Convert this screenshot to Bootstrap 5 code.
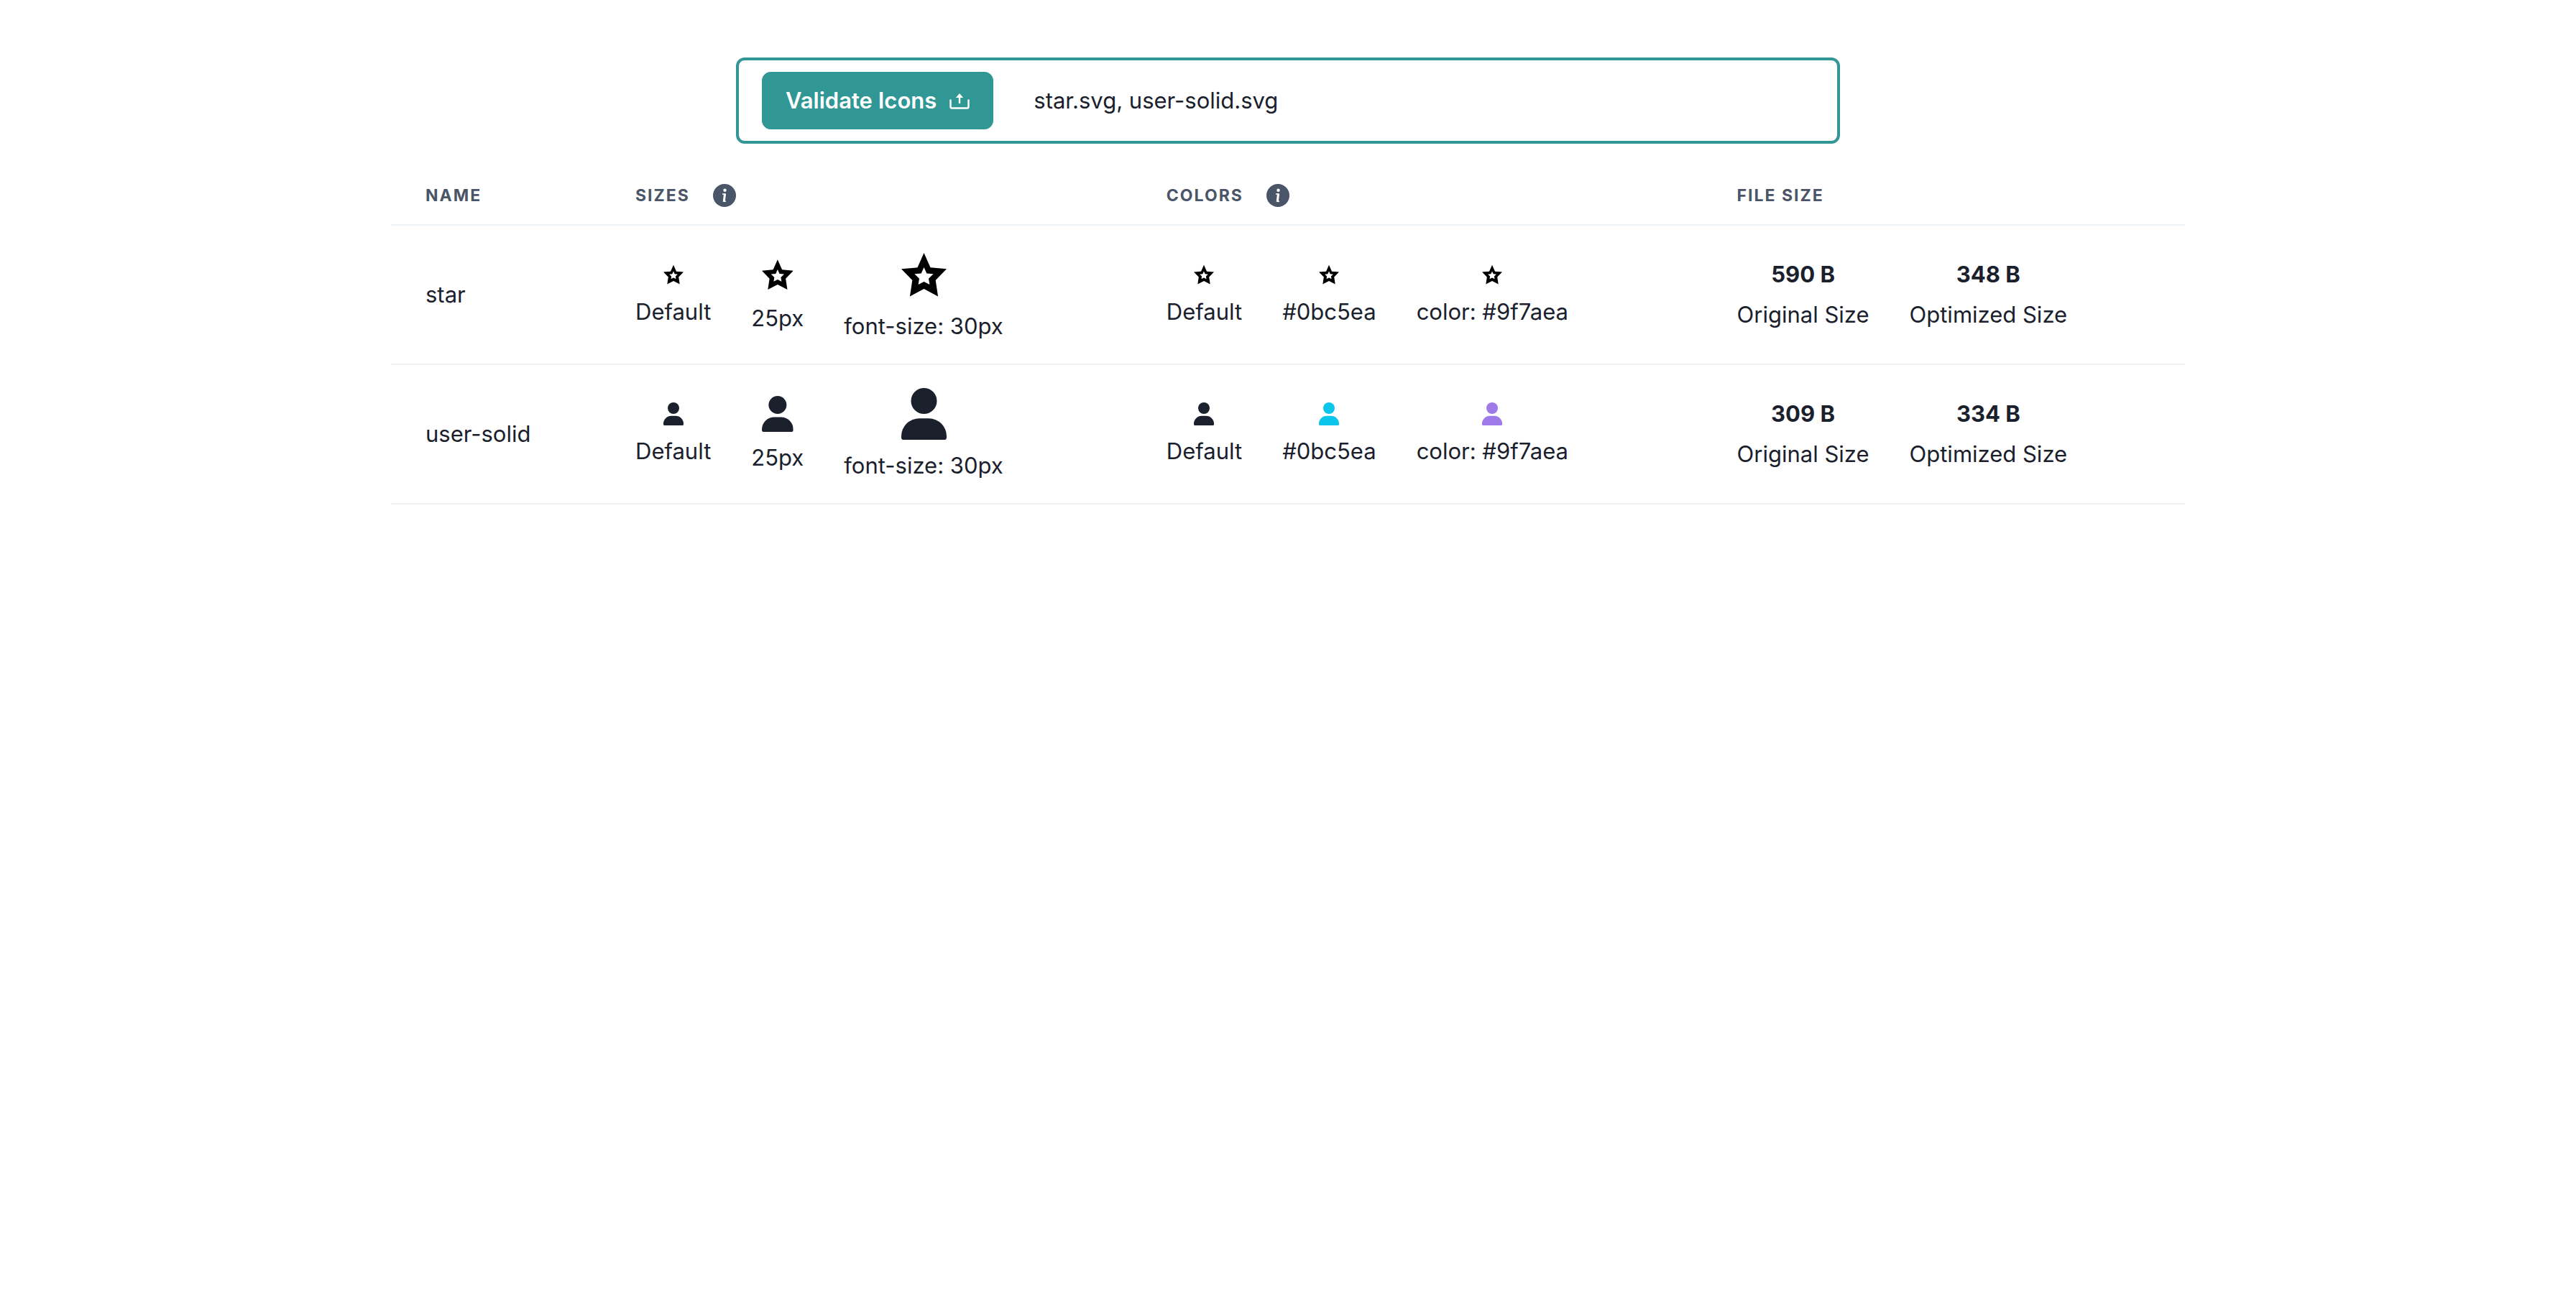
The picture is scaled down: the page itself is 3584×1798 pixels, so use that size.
<!DOCTYPE html>
<html lang="en">
<head>
<meta charset="utf-8">
<meta name="viewport" content="width=device-width, initial-scale=1">
<title>Icon Validator</title>
<link href="https://cdn.jsdelivr.net/npm/bootstrap@5.3.0/dist/css/bootstrap.min.css" rel="stylesheet">
<style>
  body { font-family: Inter, "Liberation Sans", sans-serif; font-size: 31px; line-height: 40px; color: #1a202c; }
  .page-shell { max-width: 2496px; padding-top: 80px; }
  .upload-box { max-width: 1536px; padding: 16px 32px; border: 4px solid #319795; border-radius: 12px; margin-bottom: 32px; }
  .upload-btn { --bs-btn-color: #fff; --bs-btn-bg: #319795; --bs-btn-border-color: #319795; --bs-btn-hover-color: #fff; --bs-btn-hover-bg: #2c7a7b; --bs-btn-hover-border-color: #2c7a7b; --bs-btn-font-size: 31px; --bs-btn-font-weight: 600; --bs-btn-line-height: 40px; --bs-btn-padding-x: 32px; --bs-btn-padding-y: 19px; --bs-btn-border-radius: 12px; gap: 18px; }
  .upload-files { font-size: 31px; line-height: 40px; color: #1a202c; padding: 0; margin-left: 56px; }
  .icon-table { --bs-table-color: #1a202c; --bs-table-bg: transparent; table-layout: fixed; color: #1a202c; }
  .icon-table > :not(caption) > * > * { padding: 32px 48px; border-bottom: 2px solid #edf2f7; }
  .icon-table > thead > tr > th { padding-top: 24px; padding-bottom: 24px; font-size: 23px; line-height: 32px; font-weight: 700; letter-spacing: 2px; color: #4a5568; text-transform: uppercase; }
  .col-name { width: 11.7%; } .col-sizes { width: 29.6%; } .col-colors { width: 31.8%; }
  .head-flex { gap: 32px; }
  .samples { gap: 56px; }
  .sample { gap: 16px; }
  .ico { display: block; height: 32px; width: auto; fill: currentColor; }
  .ico-25 { height: 50px; }
  .ico-30 { height: 72px; }
  .ico-star { fill: #000; }
  .tint-cyan { color: #0bc5ea; }
  .tint-purple { color: #9f7aea; }
</style>
<script src="https://cdn.jsdelivr.net/npm/bootstrap@5.3.0/dist/js/bootstrap.bundle.min.js"></script>
</head>
<body>
<svg class="d-none" aria-hidden="true">
  <symbol id="star" viewBox="0 0 28 32"><path fill-rule="evenodd" d="M14 2.700 18 11.700 28 12.600 21.200 19.600 22.700 29.500 14 24.900 5.300 29.500 6.800 19.600 0 12.600 10 11.700ZM14 11.500 12.300 15.300 8.200 15.700 11.100 18.500 10.500 22.200 14 20.400 17.500 22.200 16.900 18.500 19.800 15.700 15.700 15.300Z"/></symbol>
  <symbol id="user" viewBox="0 0 28 32"><circle cx="14" cy="8" r="8"/><path d="M11 18.800h6A11 11 0 0 1 28 29.800V30.500A1.500 1.500 0 0 1 26.500 32H1.500A1.500 1.500 0 0 1 0 30.500V29.800A11 11 0 0 1 11 18.800Z"/></symbol>
  <symbol id="info" viewBox="0 0 32 32"><circle cx="16" cy="16" r="16"/><circle cx="16.500" cy="8.700" r="2.200" fill="#fff"/><path fill="none" stroke="#fff" stroke-width="1.500" d="M13 14H16M15 24.200H18"/><path fill="none" stroke="#fff" stroke-width="3" d="M16.600 13.200 15.200 25"/></symbol>
</svg>
<main class="page-shell container-fluid px-0">
  <form class="upload-box d-flex align-items-center mx-auto">
    <button type="button" class="upload-btn btn d-inline-flex align-items-center flex-shrink-0">Validate Icons
      <svg width="28" height="28" viewBox="0 0 28 28" fill="none" stroke="#fff" stroke-width="2.400" aria-hidden="true"><path stroke-linecap="round" d="M1.500 13.500V22.500Q1.500 24.500 3.500 24.500H24.500Q26.500 24.500 26.500 22.500V13.500"/><path d="M14 18V8"/><path fill="#fff" stroke="none" d="M14 4 19.200 10H8.800Z"/></svg>
    </button>
    <input type="text" class="upload-files form-control-plaintext" aria-label="Selected files" value="star.svg, user-solid.svg" readonly>
  </form>
  <table class="icon-table table align-middle mb-0">
    <colgroup><col class="col-name"><col class="col-sizes"><col class="col-colors"><col></colgroup>
    <thead>
      <tr>
        <th scope="col">Name</th>
        <th scope="col"><div class="head-flex d-flex align-items-center">Sizes<svg class="ico" viewBox="0 0 32 32"><use href="#info"/></svg></div></th>
        <th scope="col"><div class="head-flex d-flex align-items-center">Colors<svg class="ico" viewBox="0 0 32 32"><use href="#info"/></svg></div></th>
        <th scope="col">File size</th>
      </tr>
    </thead>
    <tbody>
      <tr>
        <td>star</td>
        <td><div class="samples d-flex align-items-center">
          <div class="sample d-flex flex-column align-items-center"><svg class="ico ico-star" viewBox="0 0 28 32"><use href="#star"/></svg><span>Default</span></div>
          <div class="sample d-flex flex-column align-items-center"><svg class="ico ico-star ico-25" viewBox="0 0 28 32"><use href="#star"/></svg><span>25px</span></div>
          <div class="sample d-flex flex-column align-items-center"><svg class="ico ico-star ico-30" viewBox="0 0 28 32"><use href="#star"/></svg><span>font-size: 30px</span></div>
        </div></td>
        <td><div class="samples d-flex align-items-center">
          <div class="sample d-flex flex-column align-items-center"><svg class="ico ico-star" viewBox="0 0 28 32"><use href="#star"/></svg><span>Default</span></div>
          <div class="sample d-flex flex-column align-items-center"><svg class="ico ico-star" viewBox="0 0 28 32"><use href="#star"/></svg><span>#0bc5ea</span></div>
          <div class="sample d-flex flex-column align-items-center"><svg class="ico ico-star" viewBox="0 0 28 32"><use href="#star"/></svg><span>color: #9f7aea</span></div>
        </div></td>
        <td><div class="samples d-flex align-items-center">
          <div class="sample d-flex flex-column align-items-center"><span class="fw-bold">590 B</span><span>Original Size</span></div>
          <div class="sample d-flex flex-column align-items-center"><span class="fw-bold">348 B</span><span>Optimized Size</span></div>
        </div></td>
      </tr>
      <tr>
        <td>user-solid</td>
        <td><div class="samples d-flex align-items-center">
          <div class="sample d-flex flex-column align-items-center"><svg class="ico" viewBox="0 0 28 32"><use href="#user"/></svg><span>Default</span></div>
          <div class="sample d-flex flex-column align-items-center"><svg class="ico ico-25" viewBox="0 0 28 32"><use href="#user"/></svg><span>25px</span></div>
          <div class="sample d-flex flex-column align-items-center"><svg class="ico ico-30" viewBox="0 0 28 32"><use href="#user"/></svg><span>font-size: 30px</span></div>
        </div></td>
        <td><div class="samples d-flex align-items-center">
          <div class="sample d-flex flex-column align-items-center"><svg class="ico" viewBox="0 0 28 32"><use href="#user"/></svg><span>Default</span></div>
          <div class="sample d-flex flex-column align-items-center"><svg class="ico tint-cyan" viewBox="0 0 28 32"><use href="#user"/></svg><span>#0bc5ea</span></div>
          <div class="sample d-flex flex-column align-items-center"><svg class="ico tint-purple" viewBox="0 0 28 32"><use href="#user"/></svg><span>color: #9f7aea</span></div>
        </div></td>
        <td><div class="samples d-flex align-items-center">
          <div class="sample d-flex flex-column align-items-center"><span class="fw-bold">309 B</span><span>Original Size</span></div>
          <div class="sample d-flex flex-column align-items-center"><span class="fw-bold">334 B</span><span>Optimized Size</span></div>
        </div></td>
      </tr>
    </tbody>
  </table>
</main>
</body>
</html>
